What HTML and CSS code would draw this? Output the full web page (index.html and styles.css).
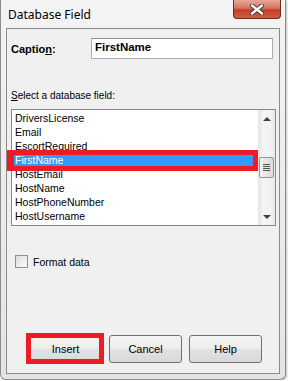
FILE: index.html
```html
<!DOCTYPE html>
<html lang="en">
<head>
    <meta charset="UTF-8">
    <title>Database Field</title>
    <link rel="stylesheet" href="styles.css">
</head>
<body>

<div class="window">
    <div class="titlebar">
        <span class="title">Database Field</span>
        <div class="close-btn">
            <svg width="14" height="11" viewBox="0 0 14 11">
                <path d="M2 1.5 L12 9.5 M12 1.5 L2 9.5" stroke="#3a3a3a" stroke-width="4.2" stroke-linecap="round"/>
                <path d="M2 1.5 L12 9.5 M12 1.5 L2 9.5" stroke="#ffffff" stroke-width="2.4" stroke-linecap="round"/>
            </svg>
        </div>
    </div>

    <div class="client">
        <div class="caption-row">
            <label class="caption-label">Captio<u>n</u>:</label>
            <div class="textbox">FirstName</div>
        </div>

        <div class="field-label"><u>S</u>elect a database field:</div>

        <div class="listbox">
            <ul class="items">
                <li>DriversLicense</li>
                <li>Email</li>
                <li>EscortRequired</li>
                <li class="selected">FirstName</li>
                <li>HostEmail</li>
                <li>HostName</li>
                <li>HostPhoneNumber</li>
                <li>HostUsername</li>
            </ul>
            <div class="scrollbar">
                <div class="arrow up"></div>
                <div class="track">
                    <div class="thumb"><span></span><span></span><span></span><span></span></div>
                </div>
                <div class="arrow down"></div>
            </div>
        </div>

        <div class="check-row">
            <span class="checkbox"></span>
            <span>Format data</span>
        </div>

        <div class="buttons">
            <button class="btn marked">Insert</button>
            <button class="btn">Cancel</button>
            <button class="btn">Help</button>
        </div>
    </div>
</div>

</body>
</html>
```

FILE: styles.css
```css
body, html {
    margin: 0;
    background: #ffffff;
    font-family: "Liberation Sans", Arial, sans-serif;
    font-size: 10.5px;
    color: #000;
}

.window {
    width: 284px;
    height: 379px;
    border: 1px solid #8d8d8d;
    border-top: none;
    border-radius: 0 0 6px 6px;
    background: linear-gradient(to bottom, #f4f4f4, #e9eaeb 60%, #e3e4e5);
    box-shadow: 1px 1px 2px rgba(0, 0, 0, 0.25);
}

.titlebar {
    height: 28px;
    display: flex;
    justify-content: space-between;
    align-items: flex-start;
}
.title {
    font-family: "Noto Sans", sans-serif;
    font-size: 12px;
    margin: 6px 0 0 7px;
}
.close-btn {
    width: 46px;
    height: 18px;
    margin-right: 4px;
    border: 1px solid #6e2a1f;
    border-top: none;
    border-radius: 0 0 4px 4px;
    background: linear-gradient(to bottom, #e9a99b, #d7735f 45%, #c1402b 55%, #d35a40);
    display: flex;
    justify-content: center;
    align-items: center;
}

.client {
    width: 274px;
    height: 346px;
    box-sizing: border-box;
    margin-left: 5px;
    border: 1px solid #8b8b8b;
    background: #f0f0f0;
}

.caption-row {
    display: flex;
    align-items: center;
    margin-top: 9px;
}
.caption-label {
    width: 80px;
    padding-left: 4px;
    font-weight: bold;
    font-size: 11px;
}
.textbox {
    width: 182px;
    height: 21px;
    box-sizing: border-box;
    border: 1px solid #abadb3;
    border-top-color: #8e8f8f;
    background: #fff;
    padding: 2px 3px;
    font-weight: bold;
    font-size: 11.5px;
}

.field-label {
    margin-top: 30px;
    padding-left: 4px;
    line-height: 13px;
    font-size: 10px;
}

.listbox {
    position: relative;
    display: flex;
    width: 265px;
    height: 117px;
    box-sizing: border-box;
    margin: 7px 0 0 4px;
    border: 1px solid #828790;
    background: #fff;
}
.items {
    list-style: none;
    margin: 0;
    padding: 1px 5px 0 2px;
    flex: 1;
}
.items li {
    height: 14px;
    line-height: 14px;
    padding-left: 1px;
}
.items li.selected {
    position: relative;
    background: #3399ff;
    color: #fff;
}
.items li.selected::after {
    content: "";
    position: absolute;
    top: -3px;
    bottom: -4px;
    left: -7px;
    right: -5px;
    border: 5px solid #ed1c24;
    border-left-width: 7px;
}

.scrollbar {
    width: 17px;
    display: flex;
    flex-direction: column;
    background: linear-gradient(to right, #e3e3e3, #f3f3f3 30%, #f3f3f3 70%, #e8e8e8);
}
.arrow {
    height: 17px;
    display: flex;
    justify-content: center;
    align-items: center;
}
.arrow::before {
    content: "";
    border-left: 4px solid transparent;
    border-right: 4px solid transparent;
}
.arrow.up::before {
    border-bottom: 4px solid #404040;
}
.arrow.down::before {
    border-top: 4px solid #404040;
}
.track {
    flex: 1;
    padding-top: 30px;
}
.thumb {
    height: 21px;
    margin: 0 1px;
    box-sizing: border-box;
    border: 1px solid #959595;
    border-radius: 2px;
    background: linear-gradient(to right, #f3f3f3, #e6e6e6 50%, #d9d9d9);
    display: flex;
    flex-direction: column;
    justify-content: center;
    align-items: center;
    gap: 1px;
}
.thumb span {
    width: 7px;
    height: 1px;
    background: #555;
}

.check-row {
    display: flex;
    align-items: center;
    margin-top: 29px;
    padding-left: 8px;
    height: 13px;
}
.checkbox {
    width: 13px;
    height: 13px;
    box-sizing: border-box;
    border: 1px solid #8e8f8f;
    background: linear-gradient(135deg, #dcdcdc, #fdfdfd);
    margin-right: 5px;
}

.buttons {
    display: flex;
    gap: 7px;
    margin-top: 67px;
    padding-left: 22px;
}
.btn {
    position: relative;
    width: 73px;
    height: 28px;
    border: 1px solid #707070;
    border-radius: 3px;
    background: linear-gradient(to bottom, #f4f4f4, #ececec 50%, #e2e2e2 51%, #d8d8d8);
    font-family: "Liberation Sans", Arial, sans-serif;
    font-size: 11px;
    color: #000;
    padding: 0;
}
.btn.marked::after {
    content: "";
    position: absolute;
    top: -3px;
    bottom: -2px;
    left: -4px;
    right: -3px;
    border: 5px solid #ed1c24;
}
```
